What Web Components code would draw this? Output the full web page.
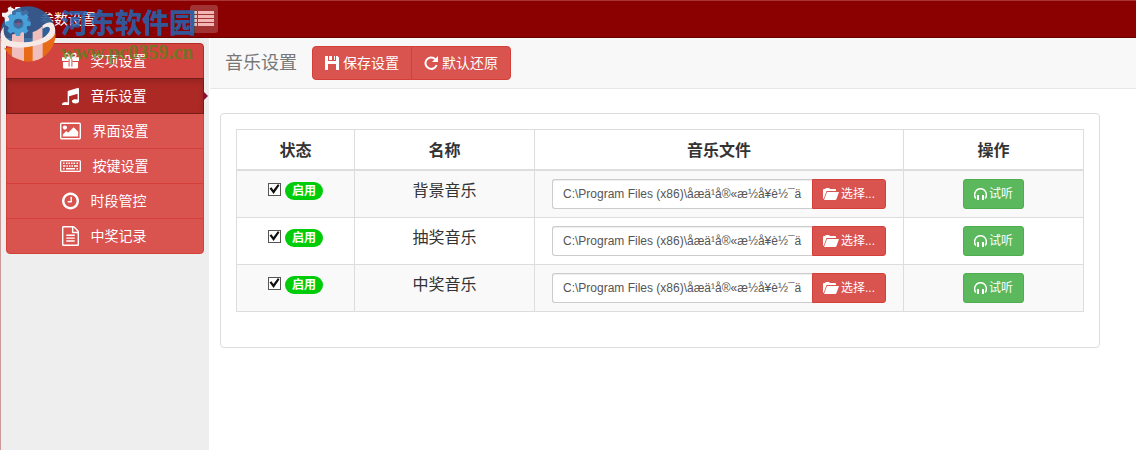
<!DOCTYPE html>
<html lang="zh-CN">
<head>
<meta charset="utf-8">
<title>参数设置</title>
<style>
    body {
        margin: 0;
        font: 14px/20px "Liberation Sans", "Noto Sans CJK SC", sans-serif;
        color: #333;
        background: #fff;
    }
</style>
</head>
<body>
<settings-app></settings-app>

<script>
const ICONS = {
    gift: ['0 0 18 18', '<path d="M0 5h7.500v4H0zM10.500 5H18v4h-7.500zM1 10h6.500v7H2.500Q1 17 1 15.500zM10.500 10H17v5.500q0 1.500-1.500 1.500h-5zM7 5h4v12H7z"/><path d="M9 5C7.500 1.500 6 .8 4.700 1S2.600 3.500 4 4.500 7.500 5 9 5zm0 0c1.500-3.500 3-4.200 4.300-4s2.100 2.500.7 3.500S10.500 5 9 5z" fill="none" stroke="currentColor" stroke-width="1.600"/><path d="M7.500 7v8M10.500 7v8" stroke="#d2443f"/>'],
    music: ['128 96 1536 1536', '<path d="M1664 224v1120q0 50-34 89t-86 60.500-103.500 32-96.500 10.500-96.500-10.500-103.500-32-86-60.500-34-89 34-89 86-60.500 103.500-32 96.500-10.500q105 0 192 39v-537l-768 237v709q0 50-34 89t-86 60.500-103.500 32-96.500 10.500-96.500-10.500-103.500-32-86-60.500-34-89 34-89 86-60.500 103.500-32 96.500-10.500q105 0 192 39v-967q0-31 19-56.500t49-35.500l832-256q12-4 28-4 40 0 68 28t28 68z"/>'],
    image: ['-64 128 1920 1536', '<path d="M576 576q0 80-56 136t-136 56-136-56-56-136 56-136 136-56 136 56 56 136zm1024 384v448h-1408v-192l320-320 160 160 512-512zm96-704h-1600q-13 0-22.500 9.500t-9.500 22.500v1216q0 13 9.500 22.500t22.500 9.500h1600q13 0 22.500-9.500t9.500-22.500v-1216q0-13-9.500-22.500t-22.500-9.500zm160 32v1216q0 66-47 113t-113 47h-1600q-66 0-113-47t-47-113v-1216q0-66 47-113t113-47h1600q66 0 113 47t47 113z"/>'],
    keyboard: ['0 0 21 14', '<path fill-rule="evenodd" d="M1.500 1h18q1.500 0 1.500 1.500v9q0 1.500-1.500 1.500h-18Q0 13 0 11.500v-9Q0 1 1.500 1zM1.300 2.300v9.400h18.400V2.300z"/><path d="M3 3.500h1.500V5H3zm3 0h1.500V5H6zm2.500 0H10V5H8.500zm2.500 0h1.500V5H11zm2.500 0H15V5h-1.500zm3 0H18V5h-1.500zM3 6.200h2.500v1.500H3zm3.500 0H8v1.500H6.500zm2.500 0h1.500v1.500H9zm2.500 0H13v1.500h-1.500zm2.500 0h4v1.500h-4zM3 9h1.500v1.500H3zm3 0h9v1.500H6zm10.500 0H18v1.500h-1.500z"/>'],
    clock: ['128 128 1536 1536', '<path d="M1024 544v448q0 14-9 23t-23 9h-320q-14 0-23-9t-9-23v-64q0-14 9-23t23-9h224v-352q0-14 9-23t23-9h64q14 0 23 9t9 23zm416 352q0-148-73-273t-198-198-273-73-273 73-198 198-73 273 73 273 198 198 273 73 273-73 198-198 73-273zm224 0q0 209-103 385.500t-279.500 279.500-385.500 103-385.500-103-279.500-279.500-103-385.500 103-385.500 279.500-279.500 385.500-103 385.500 103 279.500 279.500 103 385.500z"/>'],
    file: ['128 0 1536 1792', '<path d="M1596 380q28 28 48 76t20 88v1152q0 40-28 68t-68 28h-1344q-40 0-68-28t-28-68v-1600q0-40 28-68t68-28h896q40 0 88 20t76 48zm-444-244v376h376q-10-29-22-41l-313-313q-12-12-41-22zm384 1528v-1024h-416q-40 0-68-28t-28-68v-416h-768v1536h1280zm-1024-864q0-14 9-23t23-9h704q14 0 23 9t9 23v64q0 14-9 23t-23 9h-704q-14 0-23-9t-9-23v-64zm736 224q14 0 23 9t9 23v64q0 14-9 23t-23 9h-704q-14 0-23-9t-9-23v-64q0-14 9-23t23-9h704zm0 256q14 0 23 9t9 23v64q0 14-9 23t-23 9h-704q-14 0-23-9t-9-23v-64q0-14 9-23t23-9h704z"/>'],
    save: ['0 0 14 14', '<path fill-rule="evenodd" d="M0 0h3v5h8V0h1.500L14 1.500V14h-3V8H3v6H0zM4 0h3v4H4zm5 0h1v4H9z"/>'],
    refresh: ['0 0 14 14', '<path d="M11.300 3.200A5.700 5.700 0 1 0 12.600 9" fill="none" stroke="currentColor" stroke-width="2"/><path d="M14 0v6H8z"/>'],
    folder: ['0 0 16 12', '<path d="M0 11V2q0-1 1-1h1l1-1h3l1 1h5q1 0 1 1v1H3.500L1 10z"/><path d="M4 4h12l-2.500 7q-.3 1-1.500 1H1z"/>'],
    headphones: ['0 0 13 12', '<path d="M1.800 10.500C.4 8.800.4 6.800.9 5 1.700 2.500 4 .8 6.500.8s4.800 1.700 5.600 4.200c.5 1.800.5 3.800-.9 5.500" fill="none" stroke="currentColor" stroke-width="1.500"/><path d="M3 7h2v5H3zM8 7h2v5H8z"/>'],
    list: ['0 0 20 16', '<path d="M0 0h3v3H0zm4 0h16v3H4zM0 4h3v3H0zm4 0h16v3H4zM0 8h3v3H0zm4 0h16v3H4zM0 12h3v3H0zm4 0h16v3H4z"/>'],
    cog: ['0 0 24 24', '<path fill-rule="evenodd" d="M9.500 0h5l.7 3.300 2 .9L20 2.400 23 6l-2 2.800.7 2L24 12v3l-3.300.7-1 2L21 21l-3.500 2.500-2.700-2-2 .5L12 24H9l-1-3-2-1-3 1.500L.5 18l2-2.500L2 13l-2-1V8.500l3-.7 1-2L2.500 3 6 .8l2.600 1.700zM12 7a5 5 0 1 0 .1 0z"/>']
};

class UiIcon extends HTMLElement {
    constructor() {
        super();
        this.attachShadow({ mode: 'open' });
    }

    connectedCallback() {
        const [viewBox, shape] = ICONS[this.getAttribute('name')];
        this.shadowRoot.innerHTML = `
            <style>
                :host { display: inline-flex; flex: none; width: 14px; height: 14px; }
                svg { width: 100%; height: 100%; fill: currentColor; }
            </style>
            <svg viewBox="${viewBox}" aria-hidden="true">${shape}</svg>
        `;
    }
}
customElements.define('ui-icon', UiIcon);

class UiButton extends HTMLElement {
    constructor() {
        super();
        this.attachShadow({ mode: 'open' });
        this.shadowRoot.innerHTML = `
            <style>
                :host { display: inline-flex; }
                button {
                    display: flex;
                    align-items: center;
                    gap: 4px;
                    box-sizing: border-box;
                    height: 34px;
                    padding: 0 12px;
                    border: 1px solid #d43f3a;
                    border-radius: var(--radius, 4px);
                    background: #d9534f;
                    color: #fff;
                    font: inherit;
                    white-space: nowrap;
                    cursor: pointer;
                }
                :host([small]) button {
                    height: 30px;
                    padding: 0 10px;
                    gap: 2px;
                    font-size: 12px;
                }
                :host([kind="success"]) button { background: #5cb85c; border-color: #4cae4c; }
            </style>
            <button type="button"><slot></slot></button>
        `;
    }
}
customElements.define('ui-button', UiButton);

class AppHeader extends HTMLElement {
    constructor() {
        super();
        this.attachShadow({ mode: 'open' });
        this.shadowRoot.innerHTML = `
            <style>
                :host {
                    display: flex;
                    align-items: center;
                    box-sizing: border-box;
                    height: 38px;
                    padding-left: 6px;
                    border-top: 1px solid #a33;
                    border-bottom: 1px solid #6b0000;
                    background: #8b0000;
                    color: #fff;
                }
                .brand { display: flex; align-items: center; gap: 10px; width: 184px; }
                .brand ui-icon { width: 24px; height: 24px; }
                h1 { margin: 0; font-size: 14px; font-weight: normal; }
                button {
                    display: flex;
                    align-items: center;
                    justify-content: center;
                    width: 28px;
                    height: 28px;
                    padding: 0;
                    border: 0;
                    border-radius: 3px;
                    background: #a23333;
                    color: #f4b6b4;
                }
                button ui-icon { width: 20px; height: 16px; }
            </style>
            <div class="brand"><ui-icon name="cog"></ui-icon><h1>参数设置</h1></div>
            <button type="button" aria-label="菜单"><ui-icon name="list"></ui-icon></button>
        `;
    }
}
customElements.define('app-header', AppHeader);

class MenuItem extends HTMLElement {
    constructor() {
        super();
        this.attachShadow({ mode: 'open' });
    }

    connectedCallback() {
        this.shadowRoot.innerHTML = `
            <style>
                :host { display: block; position: relative; }
                a {
                    display: flex;
                    align-items: center;
                    justify-content: center;
                    gap: 12px;
                    box-sizing: border-box;
                    height: 36px;
                    margin-bottom: -1px;
                    padding-right: 2px;
                    border: 1px solid #d43f3a;
                    border-radius: var(--radius, 0);
                    background: #d9534f;
                    color: #fff;
                    text-decoration: none;
                }
                ui-icon { width: 17px; height: 18px; }
                ui-icon[name="file"] { height: 20px; }
                ui-icon[name="image"], ui-icon[name="keyboard"] { width: 21px; }
                :host([hover]) a { background: #d2443f; border-color: #b52b27; }
                :host([active]) { z-index: 1; }
                :host([active]) a {
                    background: #ac2925;
                    border-color: #761c19;
                    box-shadow: inset 0 3px 5px rgba(0, 0, 0, 0.125);
                }
                :host([active])::after {
                    content: "";
                    position: absolute;
                    top: 14px;
                    left: 100%;
                    border: 4px solid transparent;
                    border-left-color: #861038;
                }
            </style>
            <a href="#"><ui-icon name="${this.getAttribute('icon')}"></ui-icon><slot></slot></a>
        `;
    }
}
customElements.define('menu-item', MenuItem);

class SideMenu extends HTMLElement {
    constructor() {
        super();
        this.attachShadow({ mode: 'open' });
        this.shadowRoot.innerHTML = `
            <style>
                :host {
                    display: block;
                    padding: 5px 5px 0;
                    background: #eee;
                    border-left: 1px solid #c99;
                }
                menu-item:first-child { --radius: 4px 4px 0 0; }
                menu-item:last-child { --radius: 0 0 4px 4px; }
            </style>
            <nav>
                <menu-item icon="gift" hover>奖项设置</menu-item>
                <menu-item icon="music" active>音乐设置</menu-item>
                <menu-item icon="image">界面设置</menu-item>
                <menu-item icon="keyboard">按键设置</menu-item>
                <menu-item icon="clock">时段管控</menu-item>
                <menu-item icon="file">中奖记录</menu-item>
            </nav>
        `;
    }
}
customElements.define('side-menu', SideMenu);

class PageToolbar extends HTMLElement {
    constructor() {
        super();
        this.attachShadow({ mode: 'open' });
        this.shadowRoot.innerHTML = `
            <style>
                :host {
                    display: flex;
                    align-items: center;
                    gap: 15px;
                    box-sizing: border-box;
                    height: 51px;
                    padding-left: 15px;
                    background: #f8f8f8;
                    border-bottom: 1px solid #e7e7e7;
                }
                h2 { margin: 0; font-size: 18px; font-weight: normal; color: #777; }
                .group { display: flex; }
                .first { --radius: 4px 0 0 4px; margin-right: -1px; }
                .last { --radius: 0 4px 4px 0; }
            </style>
            <h2>音乐设置</h2>
            <div class="group">
                <ui-button class="first"><ui-icon name="save"></ui-icon>保存设置</ui-button>
                <ui-button class="last"><ui-icon name="refresh"></ui-icon>默认还原</ui-button>
            </div>
        `;
    }
}
customElements.define('page-toolbar', PageToolbar);

class MusicTable extends HTMLElement {
    constructor() {
        super();
        this.attachShadow({ mode: 'open' });
    }

    connectedCallback() {
        const path = 'C:\\Program Files (x86)\\åæä¹å®«æ½å¥è½¯ä';
        const rows = ['背景音乐', '抽奖音乐', '中奖音乐'].map((name, i) => `
            <tr>
                <td>
                    <div class="state">
                        <input type="checkbox" id="on${i}" checked>
                        <label for="on${i}">启用</label>
                    </div>
                </td>
                <td>${name}</td>
                <td>
                    <div class="file">
                        <input type="text" aria-label="${name}" value="${path}">
                        <ui-button small><ui-icon name="folder"></ui-icon>选择...</ui-button>
                    </div>
                </td>
                <td><ui-button small kind="success"><ui-icon name="headphones"></ui-icon>试听</ui-button></td>
            </tr>
        `).join('');

        this.shadowRoot.innerHTML = `
            <style>
                :host {
                    display: block;
                    padding: 15px 15px 35px;
                    border: 1px solid #ddd;
                    border-radius: 4px;
                }
                table {
                    width: 100%;
                    table-layout: fixed;
                    border-collapse: separate;
                    border-spacing: 0;
                    border: 1px solid #ddd;
                    border-width: 1px 0 0 1px;
                    box-sizing: border-box;
                    font-size: 16px;
                    line-height: 24px;
                    text-align: center;
                }
                th, td {
                    box-sizing: border-box;
                    padding: 8px;
                    border: 1px solid #ddd;
                    border-width: 0 1px 1px 0;
                    vertical-align: top;
                }
                th { padding: 9px 8px 6px; border-bottom-width: 2px; }
                tbody tr:nth-child(odd) { background: #f9f9f9; }
                .narrow { width: 118px; }
                .medium { width: 180px; }
                .state {
                    display: flex;
                    align-items: center;
                    justify-content: center;
                    gap: 4px;
                    padding-top: 3px;
                }
                input[type="checkbox"] {
                    appearance: none;
                    box-sizing: border-box;
                    width: 13px;
                    height: 13px;
                    margin: 0 0 4px;
                    border: 1px solid #555;
                    background: #fff;
                }
                input[type="checkbox"]:checked::before {
                    content: "";
                    display: block;
                    width: 11px;
                    height: 11px;
                    background: #111;
                    clip-path: polygon(5% 45%, 22% 35%, 40% 60%, 82% 5%, 95% 18%, 42% 95%);
                }
                label {
                    padding: 0 7px;
                    border-radius: 10px;
                    background: #00cc0a;
                    color: #fff;
                    font-size: 12px;
                    font-weight: bold;
                    line-height: 18px;
                }
                .file {
                    display: flex;
                    max-width: 334px;
                    margin: 0 auto;
                    --radius: 0 3px 3px 0;
                }
                .file input {
                    flex: 1;
                    min-width: 0;
                    box-sizing: border-box;
                    height: 30px;
                    padding: 0 10px;
                    border: 1px solid #ccc;
                    border-right: 0;
                    border-radius: 3px 0 0 3px;
                    box-shadow: inset 0 1px 1px rgba(0, 0, 0, 0.075);
                    color: #555;
                    font: 12px "Liberation Sans", sans-serif;
                }
                td > ui-button { --radius: 3px; vertical-align: top; }
                ui-icon[name="folder"] { width: 16px; }
                ui-icon[name="headphones"] { width: 13px; }
            </style>
            <table>
                <thead>
                    <tr>
                        <th class="narrow">状态</th>
                        <th class="medium">名称</th>
                        <th>音乐文件</th>
                        <th class="medium">操作</th>
                    </tr>
                </thead>
                <tbody>${rows}</tbody>
            </table>
        `;
    }
}
customElements.define('music-table', MusicTable);

// Download site stamp that floats over the corner of the window
class SiteStamp extends HTMLElement {
    constructor() {
        super();
        this.attachShadow({ mode: 'open' });
        this.shadowRoot.innerHTML = `
            <style>
                :host {
                    position: absolute;
                    top: 6px;
                    left: 0;
                    display: flex;
                    gap: 5px;
                    pointer-events: none;
                }
                svg { width: 56px; height: 56px; }
                .name {
                    color: rgba(36, 102, 180, 0.85);
                    font-size: 27px;
                    font-weight: 900;
                    line-height: 36px;
                }
                .site {
                    color: rgba(70, 140, 20, 0.7);
                    font: bold 20px/20px "Liberation Serif", serif;
                }
            </style>
            <svg viewBox="0 0 168 168" aria-hidden="true">
                <clipPath id="disc"><circle cx="84" cy="84" r="83"/></clipPath>
                <g clip-path="url(#disc)">
                    <path d="M0 0h168v84q-60 50-168 20z" fill="#2d5f98" opacity=".9"/>
                    <path d="M10 125q90 10 158-45v88H10z" fill="#e86c17"/>
                    <path d="M36 86q18-4 36-20v100l-36-14zM98 78q14-3 30-18v104l-30 6z" fill="#f0bfbd"/>
                    <path d="M128 68q22-14 26 2 0 16-26 26z" fill="#2d5f98"/>
                    <path d="M12 62Q6 92 30 104q60 12 98-8 22-14 22-28-4-12-22 0V58q26-18 36 0 14 40-48 58-60 16-96 4Q0 108 0 92q2-20 12-30z" fill="#f6e9e6"/>
                </g>
                <path d="M36 10l-3-9-10 5 2 9-7 5H6v11l8 4 2 20 15 10 5-12z" fill="#f7eeee"/>
                <path fill="#48a0d8" fill-rule="evenodd" d="M49 18h13l2 9 6 2 8-6 8 9-5 8 3 6 8 1v12l-10 1-2 7 5 8-9 8-8-5-6 3-2 9H48l-3-9-6-3-8 5-9-8 5-9-2-6-9-2V47l10-2 2-6-5-8 9-8 8 5 6-2zM55 38a15 15 0 1 0 .1 0z"/>
                <path d="M55 46l2 5 5 0-4 4 2 5-5-3-5 3 2-5-4-4h5z" fill="#a05070"/>
            </svg>
            <div>
                <div class="name">河东软件园</div>
                <div class="site">www.pc0359.cn</div>
            </div>
        `;
    }
}
customElements.define('site-stamp', SiteStamp);

class SettingsApp extends HTMLElement {
    constructor() {
        super();
        this.attachShadow({ mode: 'open' });
        this.shadowRoot.innerHTML = `
            <style>
                :host {
                    display: flex;
                    flex-direction: column;
                    position: relative;
                    min-height: 100vh;
                }
                .body { display: flex; flex: 1; }
                side-menu { flex: none; width: 198px; }
                main { flex: 1; min-width: 0; margin-left: 1px; }
                music-table { margin: 24px 36px 24px 10px; }
            </style>
            <app-header></app-header>
            <div class="body">
                <side-menu></side-menu>
                <main>
                    <page-toolbar></page-toolbar>
                    <music-table></music-table>
                </main>
            </div>
            <site-stamp></site-stamp>
        `;
    }
}
customElements.define('settings-app', SettingsApp);
</script>
</body>
</html>
